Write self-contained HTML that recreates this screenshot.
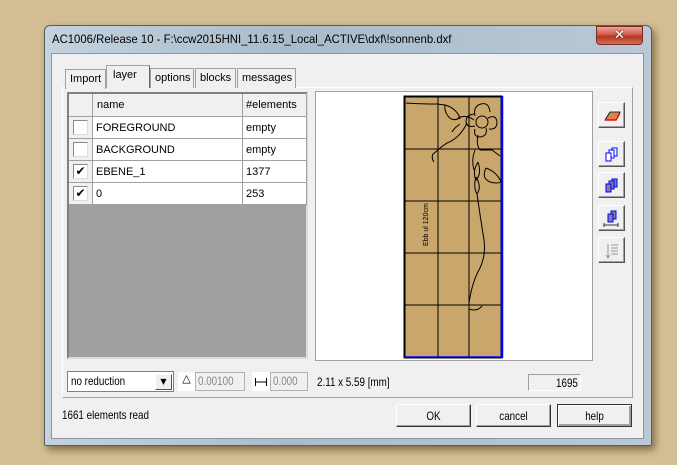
<!DOCTYPE html>
<html><head><style>
*{box-sizing:border-box;margin:0;padding:0}
body{width:677px;height:465px;background:#d4bf94;position:relative;overflow:hidden;font-family:"DejaVu Sans","Liberation Sans",sans-serif;font-size:11px;color:#000}
.abs{position:absolute}
#win{left:44px;top:25px;width:608px;height:421px;border:1px solid #555d66;border-radius:6px 6px 2px 2px;background:linear-gradient(90deg,#c3d2de,#aabccb 40%,#b9c8d4);box-shadow:3px 4px 8px rgba(60,40,10,.55)}
#title{left:52px;top:32px;font-size:12px;font-family:"Liberation Sans",sans-serif;transform:scaleX(.945);transform-origin:0 0;white-space:nowrap}
#close{left:596px;top:26px;width:47px;height:19px;border:1px solid #7a2a22;border-radius:0 0 4px 4px;background:linear-gradient(#e8a59b,#cf5a48 45%,#b8331f 55%,#d0705a);color:#fff;text-align:center;font-weight:bold;font-size:13px;line-height:17px;text-shadow:0 0 2px #333}
#client{left:51px;top:53px;width:593px;height:386px;background:#f0f0f0;border:1px solid #8c979f}
.tab{top:68px;height:20px;background:#f0f0f0;border:1px solid #a0a0a0;border-bottom:none;font-size:11px;padding:3px 0 0 4px;font-family:"Liberation Sans",sans-serif}
#panel{left:62px;top:87px;width:571px;height:311px;border:1px solid #fff;border-right-color:#a0a0a0;border-bottom-color:#a0a0a0}
#grid{left:67px;top:92px;width:241px;height:267px;background:#a0a0a0;border:2px solid #808080;border-right-color:#dcdcdc;border-bottom-color:#dcdcdc;font-family:"Liberation Sans",sans-serif;font-size:11px}
.cell{position:absolute;background:#fff;border-right:1px solid #a0a0a0;border-bottom:1px solid #a0a0a0;padding:5px 0 0 3px}
.hd{background:#f0f0f0}
.cb{position:absolute;left:4px;top:3px;width:15px;height:15px;border:1px solid #8a8a8a;border-right-color:#ddd;border-bottom-color:#ddd;background:#fff;font-size:12px;line-height:13px;text-align:center}
#prev{left:315px;top:91px;width:278px;height:270px;background:#fff;border:1px solid #a0a0a0}
.btn{position:absolute;left:598px;width:27px;height:26px;background:#f0f0f0;border:1px solid #fff;border-right-color:#555;border-bottom-color:#555;box-shadow:inset -1px -1px #a0a0a0}
.nar{font-family:"Liberation Sans",sans-serif;font-size:12px;transform:scaleX(.82);transform-origin:0 0;white-space:nowrap}
.pb{position:absolute;top:404px;height:23px;width:75px;border:1px solid #fff;border-right-color:#333;border-bottom-color:#333;box-shadow:inset -1px -1px #a0a0a0;background:#f0f0f0}
.pb span{position:absolute;left:0;right:0;top:4px;text-align:center;font-family:"Liberation Sans",sans-serif;font-size:12px;transform:scaleX(.82)}
</style></head><body>
<div id="win" class="abs"></div>
<div id="title" class="abs">AC1006/Release 10 - F:\ccw2015HNI_11.6.15_Local_ACTIVE\dxf\!sonnenb.dxf</div>
<div id="close" class="abs">✕</div>
<div id="client" class="abs"></div>
<div id="panel" class="abs"></div>
<div class="abs tab" style="left:65px;top:69px;width:41px">Import</div>
<div class="abs tab" style="left:106px;top:65px;height:23px;width:44px;z-index:2;padding-left:6px;border-right-color:#666">layer</div>
<div class="abs tab" style="left:150px;width:44px;padding-left:4px">options</div>
<div class="abs tab" style="left:195px;width:41px;padding-left:4px">blocks</div>
<div class="abs tab" style="left:237px;width:59px;padding-left:4px">messages</div>

<div id="grid" class="abs">
 <div class="cell hd" style="left:0;top:0;width:24px;height:23px"></div>
 <div class="cell hd" style="left:24px;top:0;width:150px;height:23px;padding-left:4px">name</div>
 <div class="cell hd" style="left:174px;top:0;width:64px;height:23px">#elements</div>
 <div class="cell hd" style="left:0;top:23px;width:24px;height:22px"><div class="cb"></div></div>
 <div class="cell" style="left:24px;top:23px;width:150px;height:22px">FOREGROUND</div>
 <div class="cell" style="left:174px;top:23px;width:64px;height:22px">empty</div>
 <div class="cell hd" style="left:0;top:45px;width:24px;height:22px"><div class="cb"></div></div>
 <div class="cell" style="left:24px;top:45px;width:150px;height:22px">BACKGROUND</div>
 <div class="cell" style="left:174px;top:45px;width:64px;height:22px">empty</div>
 <div class="cell hd" style="left:0;top:67px;width:24px;height:22px"><div class="cb">✔</div></div>
 <div class="cell" style="left:24px;top:67px;width:150px;height:22px">EBENE_1</div>
 <div class="cell" style="left:174px;top:67px;width:64px;height:22px">1377</div>
 <div class="cell hd" style="left:0;top:89px;width:24px;height:22px"><div class="cb">✔</div></div>
 <div class="cell" style="left:24px;top:89px;width:150px;height:22px">0</div>
 <div class="cell" style="left:174px;top:89px;width:64px;height:22px">253</div>
</div>

<div id="prev" class="abs"></div>
<svg class="abs" style="left:0;top:0" width="677" height="465">
 <rect x="404.5" y="96.5" width="97" height="261" fill="#c9a66b" stroke="#000" stroke-width="2"/>
 <line x1="502" y1="96" x2="502" y2="358" stroke="#0000ff" stroke-width="2.5"/>
 <line x1="404" y1="357" x2="503" y2="357" stroke="#0000ff" stroke-width="1.5"/>
 <g stroke="#000" stroke-width="1" fill="none">
  <path d="M438 97V357M469 97V357M405 149H501M405 201H501M405 253H501M405 305H501"/>
  <path d="M406 103Q420 104 437 104L445 105"/>
  <path d="M445 105Q456 108 460 118Q452 122 448 116Q444 111 445 105Z"/>
  <path d="M476 122a6 6 0 1 0 12 0a6 6 0 1 0 -12 0"/>
  <path d="M475 116q-2 -10 6 -12q8 -2 9 8M488 118q8 -4 9 4q0 8 -8 7M486 128q2 8 -6 9q-7 0 -5 -8M475 126q-8 2 -9 -4q0 -7 8 -8"/>
  <path d="M458 118q8 -4 16 2M460 124q-6 4 -8 8"/>
  <path d="M467 123Q460 138 447 143L440 148Q436 152 433 154Q431 158 434 162"/>
  <path d="M478 135Q476 145 480 150L492 150L500 156M475 150Q471 160 474 170"/>
  <path d="M478 162q-6 10 -2 18q6 -6 2 -18M486 168q-5 10 4 14q8 2 11 0q-4 -10 -15 -14M476 177q-3 10 1 17q5 -7 -1 -17"/>
  <path d="M477 194Q480 215 484 240Q486 255 480 268Q472 282 469 303M469 309q8 3 13 -3"/>
 </g>
 <text transform="translate(428,246) rotate(-90)" font-size="7" font-family="Liberation Sans,sans-serif">Ebb ul 120cm</text>
</svg>
<div class="btn" style="top:102px"></div>
<svg class="abs" style="left:598px;top:102px" width="27" height="26"><path d="M7 18l5-8h10l-4 8z" fill="#d08858" stroke="#000" stroke-width=".8"/><path d="M7 18h11l4-7" stroke="#f00" stroke-width="1.4" fill="none"/></svg>
<div class="btn" style="top:141px"></div>
<svg class="abs" style="left:598px;top:141px" width="27" height="26"><rect x="14" y="7" width="5" height="8" fill="#fff" stroke="#00f"/><rect x="11" y="9" width="5" height="8" fill="#fff" stroke="#00f"/><rect x="8" y="12" width="5" height="8" fill="#fff" stroke="#00f"/></svg>
<div class="btn" style="top:172px"></div>
<svg class="abs" style="left:598px;top:172px" width="27" height="26"><rect x="14" y="7" width="5" height="8" fill="#8080a0" stroke="#00f"/><rect x="11" y="9" width="5" height="8" fill="#8080a0" stroke="#00f"/><rect x="8" y="12" width="5" height="8" fill="#8080a0" stroke="#00f"/></svg>
<div class="btn" style="top:205px"></div>
<svg class="abs" style="left:598px;top:205px" width="27" height="26"><rect x="13" y="6" width="5" height="8" fill="#8080a0" stroke="#00f"/><rect x="10" y="9" width="5" height="8" fill="#8080a0" stroke="#00f"/><path d="M6 20h14M6 18v4M20 18v4" stroke="#333"/></svg>
<div class="btn" style="top:237px"></div>
<svg class="abs" style="left:598px;top:237px" width="27" height="26"><path d="M10 7v13M8 18l2 3 2-3M13 8h7M13 11h7M13 14h7M13 17h7" stroke="#999" fill="none"/></svg>

<div class="abs" style="left:67px;top:371px;width:107px;height:21px;border:1px solid #808080;background:#fff"></div>
<div class="abs nar" style="left:71px;top:374px">no reduction</div>
<div class="abs" style="left:155px;top:374px;width:17px;height:16px;background:#f0f0f0;border:1px solid #fff;border-right-color:#555;border-bottom-color:#555;font-size:8px;text-align:center;line-height:14px">▼</div>
<div class="abs" style="left:178px;top:372px;width:17px;height:19px;background:#fff;text-align:center;font-size:11px">△</div>
<div class="abs" style="left:195px;top:372px;width:50px;height:19px;border:1px solid #b0b0b0"></div>
<div class="abs nar" style="left:198px;top:374px;color:#888">0.00100</div>
<div class="abs" style="left:252px;top:372px;width:18px;height:19px;background:#fff"></div>
<svg class="abs" style="left:252px;top:372px" width="18" height="19"><path d="M3 10h12M3.5 6v8M14.5 6v8" stroke="#000"/></svg>
<div class="abs" style="left:270px;top:372px;width:38px;height:19px;border:1px solid #b0b0b0"></div>
<div class="abs nar" style="left:273px;top:374px;color:#888">0.000</div>
<div class="abs nar" style="left:317px;top:375px">2.11 x 5.59 [mm]</div>
<div class="abs" style="left:528px;top:374px;width:53px;height:17px;border:1px solid #a0a0a0;border-right-color:#fff;border-bottom-color:#fff"></div>
<div class="abs nar" style="left:556px;top:376px">1695</div>

<div class="abs nar" style="left:62px;top:408px">1661 elements read</div>
<div class="pb" style="left:396px"><span>OK</span></div>
<div class="pb" style="left:476px"><span>cancel</span></div>
<div class="pb" style="left:557px;border:1px solid #333;box-shadow:inset 1px 1px #fff,inset -2px -2px #a0a0a0"><span>help</span></div>
</body></html>
